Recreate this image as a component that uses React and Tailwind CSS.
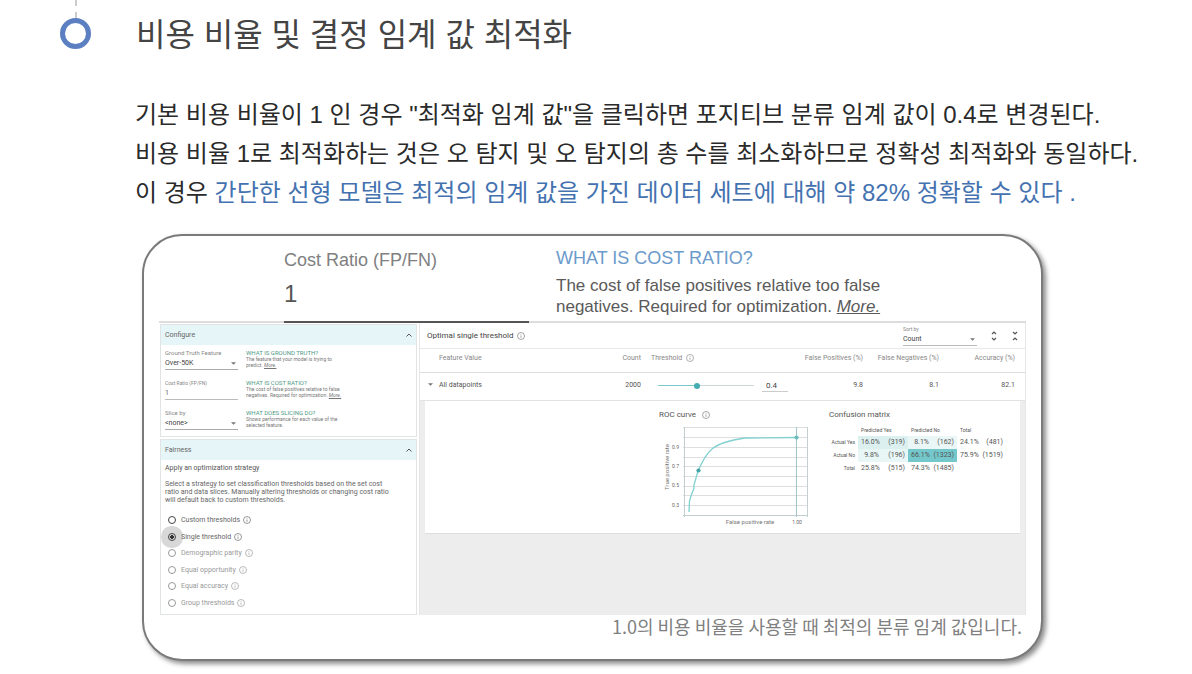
import React, { useState } from "react";

const latin = "font-['Liberation_Sans','Noto_Sans_CJK_KR',sans-serif]";

function Info({ className = "size-2" }) {
  return (
    <svg viewBox="0 0 24 24" className={`${className} shrink-0`} fill="none" stroke="currentColor" strokeWidth="2" aria-hidden="true">
      <circle cx="12" cy="12" r="10.5" />
      <path d="M12 10.5v7M12 6.2v2" />
    </svg>
  );
}

function Caret() {
  return (
    <svg viewBox="0 0 10 5" className="pointer-events-none mr-0.5 h-[3px] w-[5px] shrink-0 text-[#777]" aria-hidden="true">
      <path d="M0 0h10L5 5z" fill="currentColor" />
    </svg>
  );
}

function Chevron() {
  return (
    <svg viewBox="0 0 12 8" className="h-1 w-1.5 text-[#555]" fill="none" stroke="currentColor" strokeWidth="2" aria-hidden="true">
      <path d="M1 7l5-5 5 5" />
    </svg>
  );
}

function SelectField({ id, label, value }) {
  return (
    <div>
      <label htmlFor={id} className="block text-[6px] leading-2 text-[#888]">{label}</label>
      <div className="flex items-center border-b border-[#aaa]">
        <select id={id} className="h-3 min-w-0 flex-1 appearance-none bg-transparent text-[7px] leading-3 text-[#444] outline-none">
          <option>{value}</option>
        </select>
        <Caret />
      </div>
    </div>
  );
}

function Help({ title, children }) {
  return (
    <div className="text-[5px] leading-[6px] text-[#777]">
      <h4 className="pt-px text-[6px] text-[#4f9a86]">{title}</h4>
      <p>{children}</p>
    </div>
  );
}

function Panel({ title, children, className = "" }) {
  const [open, setOpen] = useState(true);
  return (
    <section className={`border border-[#e0e4e4] bg-white ${className}`}>
      <h3>
        <button type="button" aria-expanded={open} onClick={() => setOpen(!open)} className="flex h-5 w-full items-center justify-between bg-[#e6f5f7] px-1 text-[7px] leading-5 text-[#666]">
          {title}
          <Chevron />
        </button>
      </h3>
      {open && children}
    </section>
  );
}

const strategies = [
  { name: "Custom thresholds", tone: "text-[#666]", ring: "border-[#444]" },
  { name: "Single threshold", tone: "text-[#666]", ring: "border-[#444]" },
  { name: "Demographic parity", tone: "text-[#999]", ring: "border-[#999]" },
  { name: "Equal opportunity", tone: "text-[#999]", ring: "border-[#999]" },
  { name: "Equal accuracy", tone: "text-[#999]", ring: "border-[#999]" },
  { name: "Group thresholds", tone: "text-[#999]", ring: "border-[#999]" },
];

function Sidebar() {
  const [strategy, setStrategy] = useState("Single threshold");
  return (
    <aside className="flex w-[258px] shrink-0 flex-col gap-0.5 pt-px pl-px">
      <Panel title="Configure">
        <div className="grid grid-cols-[73px_1fr] gap-x-2 gap-y-[9px] px-1 pt-1 pb-1.5">
          <SelectField id="truth" label="Ground Truth Feature" value="Over-50K" />
          <Help title="WHAT IS GROUND TRUTH?">
            The feature that your model is trying to<br />predict. <a href="#truth" className="italic underline">More.</a>
          </Help>
          <div>
            <label htmlFor="ratio-small" className="block text-[5px] leading-2 text-[#888]">Cost Ratio (FP/FN)</label>
            <input id="ratio-small" defaultValue="1" className="block h-[13px] w-full border-b border-[#bbb] bg-transparent text-[7px] leading-3 text-[#666] outline-none" />
          </div>
          <Help title="WHAT IS COST RATIO?">
            The cost of false positives relative to false<br />negatives. Required for optimization. <a href="#ratio" className="italic underline">More.</a>
          </Help>
          <SelectField id="slice" label="Slice by" value="<none>" />
          <Help title="WHAT DOES SLICING DO?">
            Shows performance for each value of the<br />selected feature.
          </Help>
        </div>
      </Panel>
      <Panel title="Fairness" className="flex-1">
        <div className="px-1 pt-1 pb-[3px]">
          <p className="text-[7px] leading-2 text-[#555]">Apply an optimization strategy</p>
          <p className="mt-2 text-[7px] leading-2 text-[#666]">
            Select a strategy to set classification thresholds based on the set cost<br />
            ratio and data slices. Manually altering thresholds or changing cost ratio<br />
            will default back to custom thresholds.
          </p>
          <fieldset aria-label="Optimization strategy" className="mt-2 grid h-[99px] grid-rows-6">
            {strategies.map((s) => {
              const on = s.name === strategy;
              return (
                <label key={s.name} className={`flex items-center pl-[3px] text-[7px] leading-2 ${s.tone}`}>
                  <span className={`flex size-2 items-center justify-center rounded-full ${on ? "bg-[#d8d8d8] shadow-[0_0_0_7px_#d8d8d8]" : ""}`}>
                    <input
                      type="radio"
                      name="strategy"
                      checked={on}
                      onChange={() => setStrategy(s.name)}
                      className={`size-2 shrink-0 appearance-none rounded-full border ${s.ring} checked:bg-[radial-gradient(circle,#333_40%,transparent_50%)]`}
                    />
                  </span>
                  <span className="relative ml-[5px]">{s.name}</span>
                  <Info className="ml-[3px] size-2" />
                </label>
              );
            })}
          </fieldset>
        </div>
      </Panel>
    </aside>
  );
}

function RocCurve() {
  const rows = [2, 12, 22, 32, 41, 51, 61, 70, 80, 90];
  return (
    <svg viewBox="0 0 152 104" className="mt-1 block h-[104px] w-[152px] font-[Roboto,sans-serif]" role="img" aria-label="ROC curve">
      <g fill="none" stroke="#dcdfe0" strokeWidth="1">
        {rows.map((y) => (
          <path key={y} d={`M24 ${y}.5H149`} />
        ))}
      </g>
      <path d="M25.5 2V92M148.5 2V92M24 90.5H149" fill="none" stroke="#c3cfd0" />
      <path d="M137.5 2V92" fill="none" stroke="#a3c4c8" />
      <path d="M30 87L30.5 76L32 71L35 63V60L39 46C43 37 47 29 53 24C60 18 72 15 86 13L137 12.5" fill="none" stroke="#83d0d0" strokeWidth="1.3" />
      <circle cx="39.5" cy="45.5" r="2.1" fill="#45a5a3" />
      <circle cx="137.5" cy="12.5" r="2.1" fill="#6bbcbc" />
      <g fontSize="5" fill="#666" textAnchor="end">
        <text x="20" y="24">0.9</text>
        <text x="20" y="43">0.7</text>
        <text x="20" y="62">0.5</text>
        <text x="20" y="82">0.3</text>
      </g>
      <g fontSize="6" fill="#777" textAnchor="middle">
        <text transform="translate(10 42) rotate(-90)">True positive rate</text>
        <text x="91" y="99">False positive rate</text>
      </g>
      <text x="138" y="99" fontSize="5" fill="#666" textAnchor="middle">1.00</text>
    </svg>
  );
}

function Cell({ pct, n, className = "" }) {
  return (
    <td className={`p-0 ${className}`}>
      <div className="flex justify-between px-[3px]">
        <span className="w-[18px] text-right">{pct}</span>
        <span>({n})</span>
      </div>
    </td>
  );
}

function ConfusionMatrix() {
  return (
    <div>
      <h4 className="text-[8px] leading-3 text-[#555]">Confusion matrix</h4>
      <table className="mt-1 table-fixed border-collapse text-[7px] leading-[13px] text-[#555]">
        <colgroup>
          <col className="w-[29px]" />
          <col className="w-[50px]" />
          <col className="w-[49px]" />
          <col className="w-[49px]" />
        </colgroup>
        <thead className="text-left text-[5px] leading-[11px]">
          <tr>
            <td />
            <th className="p-0 pl-[3px] font-normal">Predicted Yes</th>
            <th className="p-0 pl-[3px] font-normal">Predicted No</th>
            <th className="p-0 pl-[3px] font-normal">Total</th>
          </tr>
        </thead>
        <tbody>
          <tr>
            <th className="p-0 pr-[3px] text-right text-[5px] font-normal whitespace-nowrap">Actual Yes</th>
            <Cell pct="16.0%" n="319" className="bg-[#dcf0f0]" />
            <Cell pct="8.1%" n="162" className="bg-[#ebf6f6]" />
            <Cell pct="24.1%" n="481" />
          </tr>
          <tr>
            <th className="p-0 pr-[3px] text-right text-[5px] font-normal whitespace-nowrap">Actual No</th>
            <Cell pct="9.8%" n="196" className="bg-[#e8f6f6]" />
            <Cell pct="66.1%" n="1323" className="bg-[#74c7cb]" />
            <Cell pct="75.9%" n="1519" />
          </tr>
          <tr>
            <th className="p-0 pr-[3px] text-right text-[5px] font-normal">Total</th>
            <Cell pct="25.8%" n="515" />
            <Cell pct="74.3%" n="1485" />
            <td />
          </tr>
        </tbody>
      </table>
    </div>
  );
}

function Results() {
  const [threshold, setThreshold] = useState(0.4);
  return (
    <div className="flex min-w-0 flex-1 flex-col border-x border-[#e6e6e6] bg-[#ededed]">
      <div className="flex h-[25px] items-center bg-white pt-px pr-1.5 pl-[7px]">
        <h3 className="flex flex-1 items-center gap-1 text-[8px] leading-3 text-[#444]">
          Optimal single threshold <Info className="size-2 text-[#777]" />
        </h3>
        <div className="w-[74px]">
          <label htmlFor="sort" className="block text-[5px] leading-[7px] text-[#888]">Sort by</label>
          <div className="flex items-center border-b border-[#bbb]">
            <select id="sort" className="h-3 min-w-0 flex-1 appearance-none bg-transparent text-[7px] leading-3 text-[#444] outline-none">
              <option>Count</option>
            </select>
            <Caret />
          </div>
        </div>
        <button type="button" aria-label="Expand all" className="ml-[13px] text-[#555]">
          <svg viewBox="0 0 8 12" className="h-3 w-2" fill="none" stroke="currentColor" strokeWidth="1.2"><path d="M2 4l2-2 2 2M2 8l2 2 2-2" /></svg>
        </button>
        <button type="button" aria-label="Collapse all" className="ml-[13px] text-[#555]">
          <svg viewBox="0 0 8 12" className="h-3 w-2" fill="none" stroke="currentColor" strokeWidth="1.2"><path d="M2 2l2 2 2-2M2 10l2-2 2 2" /></svg>
        </button>
      </div>
      <table className="w-full table-fixed border-collapse bg-white text-[7px] leading-3">
        <colgroup>
          <col className="w-[19px]" />
          <col />
          <col className="w-10" />
          <col className="w-[148px]" />
          <col className="w-[74px]" />
          <col className="w-[76px]" />
          <col className="w-[86px]" />
        </colgroup>
        <thead className="text-[#888]">
          <tr className="h-6 border-t border-b border-t-[#e8e8e8] border-b-[#ddd]">
            <td />
            <th className="pb-1.5 text-left font-normal">Feature Value</th>
            <th className="pb-1.5 text-right font-normal">Count</th>
            <th className="pb-1.5 pl-2.5 font-normal"><span className="flex items-center gap-1">Threshold <Info className="size-2" /></span></th>
            <th className="pb-1.5 text-right font-normal whitespace-nowrap">False Positives (%)</th>
            <th className="pb-1.5 text-right font-normal whitespace-nowrap">False Negatives (%)</th>
            <th className="pr-2.5 pb-1.5 text-right font-normal">Accuracy (%)</th>
          </tr>
        </thead>
        <tbody className="text-[#555]">
          <tr className="h-7 border-b border-[#e2e2e2]">
            <td className="pb-1 pl-2">
              <button type="button" aria-label="Toggle details" className="flex">
                <Caret />
              </button>
            </td>
            <td className="pb-1">All datapoints</td>
            <td className="pb-1 text-right">2000</td>
            <td className="pb-0.5 pl-[17px]">
              <div className="flex items-center">
                <input
                  type="range"
                  aria-label="Threshold"
                  min="0"
                  max="1"
                  step="0.01"
                  value={threshold}
                  onChange={(e) => setThreshold(e.target.value)}
                  className="h-1.5 w-24 appearance-none bg-[linear-gradient(90deg,#7cc9cd_40%,#cfd6d6_40%)] bg-[length:100%_1px] bg-center bg-no-repeat [&::-webkit-slider-thumb]:size-1.5 [&::-webkit-slider-thumb]:appearance-none [&::-webkit-slider-thumb]:rounded-full [&::-webkit-slider-thumb]:bg-[#45adb2]"
                />
                <input
                  aria-label="Threshold value"
                  value={threshold}
                  onChange={(e) => setThreshold(e.target.value)}
                  className="ml-2 h-[13px] w-[26px] border-b border-[#ccc] pl-1 text-[8px] text-[#444] outline-none"
                />
              </div>
            </td>
            <td className="pb-1 text-right">9.8</td>
            <td className="pb-1 text-right">8.1</td>
            <td className="pr-2.5 pb-1 text-right">82.1</td>
          </tr>
        </tbody>
      </table>
      <div className="mx-[5px] flex items-start border-b border-[#ddd] bg-white pt-2 pb-1 text-[#555]">
        <div className="ml-auto">
          <h4 className="flex items-center gap-1.5 text-[8px] leading-3">ROC curve <Info className="size-2 text-[#777]" /></h4>
          <RocCurve />
        </div>
        <div className="mr-3.5 ml-[18px]">
          <ConfusionMatrix />
        </div>
      </div>
    </div>
  );
}

export default function App() {
  return (
    <main className={`min-h-screen bg-white pr-[48px] pl-[60px] ${latin}`}>
      <header className="flex items-start gap-[45px]">
        <div className="flex w-[31px] flex-col items-center" aria-hidden="true">
          <span className="h-[18px] border-l-2 border-dashed border-[#ccc]" />
          <span className="size-[31px] rounded-full border-[5px] border-[#5b7fc1]" />
        </div>
        <h1 className="mt-[13px] text-[32px] leading-[44px] text-[#444]">비용 비율 및 결정 임계 값 최적화</h1>
      </header>
      <div className="mt-[38px] ml-[75px] text-2xl leading-[39px] text-[#2a2a2a]">
        <p>기본 비용 비율이 1 인 경우 "최적화 임계 값"을 클릭하면 포지티브 분류 임계 값이 0.4로 변경된다.</p>
        <p className="whitespace-nowrap">비용 비율 1로 최적화하는 것은 오 탐지 및 오 탐지의 총 수를 최소화하므로 정확성 최적화와 동일하다.</p>
        <p>이 경우 <span className="text-[#4472b0]">간단한 선형 모델은 최적의 임계 값을 가진 데이터 세트에 대해 약 82% 정확할 수 있다 .</span></p>
      </div>
      <figure className="mt-[22px] mr-[101px] ml-[82px] rounded-[40px] border-2 border-[#7a7a7a] bg-white px-[15px] pb-[21px] shadow-[3px_3px_5px_rgba(0,0,0,0.45)]">
        <div className="flex">
          <div className="w-[125px] border-b-2 border-[#ddd]" />
          <div className="w-[245px] border-b-2 border-[#555] pt-3.5 pb-[11px]">
            <label htmlFor="ratio" className="block text-lg leading-5 text-[#808080]">Cost Ratio (FP/FN)</label>
            <input id="ratio" defaultValue="1" className="mt-2 block h-8 w-full bg-transparent text-2xl text-[#555] outline-none" />
          </div>
          <div className="flex-1 border-b-2 border-[#ddd] pt-3 pl-[27px]">
            <h2 className="text-lg leading-5 text-[#6c9acb]">WHAT IS COST RATIO?</h2>
            <p className="mt-[7px] text-[17px] leading-[21px] text-[#5a5a5a]">
              The cost of false positives relative too false<br />
              negatives. Required for optimization. <a href="#ratio" className="italic underline">More.</a>
            </p>
          </div>
        </div>
        <div className="flex gap-0.5 font-[Roboto,sans-serif]">
          <Sidebar />
          <Results />
        </div>
        <figcaption className="pr-1 text-right font-['Noto_Sans_CJK_KR',sans-serif] text-lg leading-[23px] text-[#808080]">
          1.0의 비용 비율을 사용할 때 최적의 분류 임계 값입니다.
        </figcaption>
      </figure>
    </main>
  );
}
